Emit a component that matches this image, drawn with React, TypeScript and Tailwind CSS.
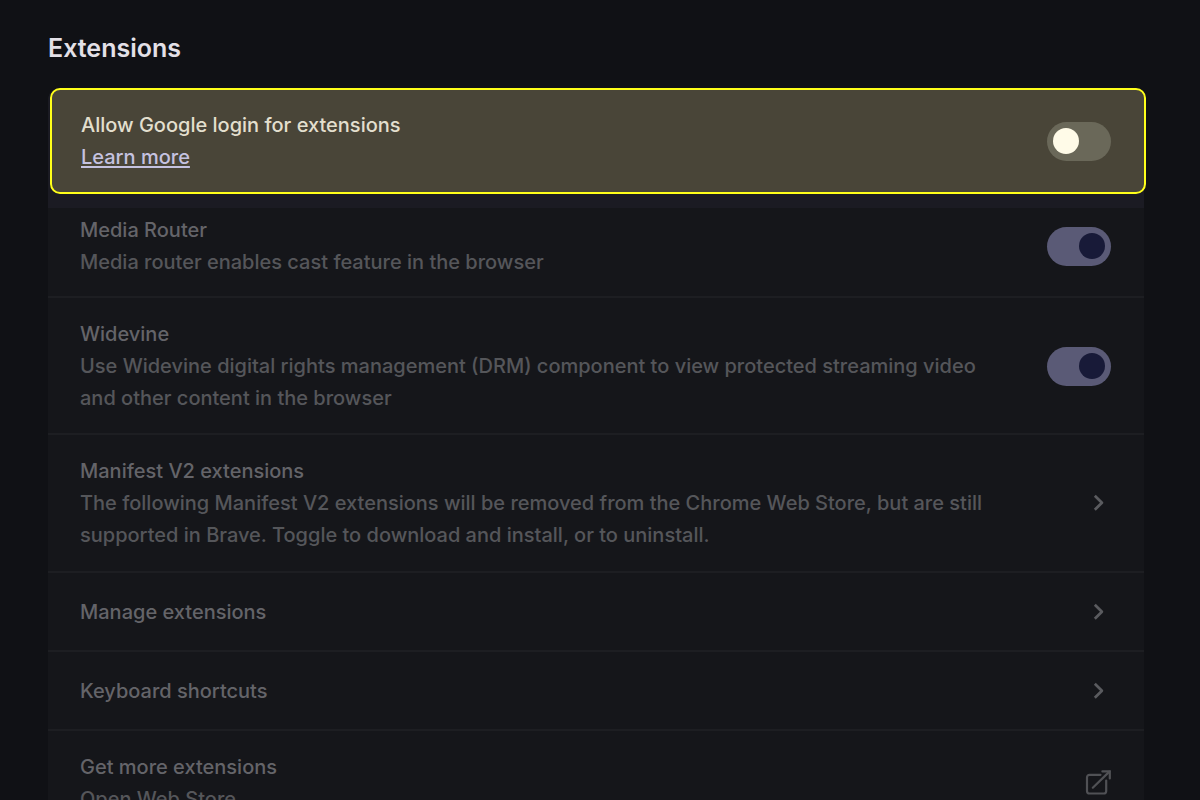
import React from "react";

interface ToggleProps {
  id: string;
  on?: boolean;
}

// Off switches only appear on the highlighted row, so they take its warm tint
const Toggle = ({ id, on = false }: ToggleProps) => (
  <input
    id={id}
    type="checkbox"
    role="switch"
    defaultChecked={on}
    className="h-[39px] w-16 shrink-0 cursor-pointer appearance-none rounded-full bg-[#6a6859] p-1.5
      before:block before:size-[26px] before:rounded-full before:bg-[#fffbe8] before:content-['']
      checked:bg-[#5a5a76] checked:before:translate-x-[26px] checked:before:bg-[#181a38]"
  />
);

const ChevronIcon = () => (
  <svg
    className="mr-0.5 size-5 shrink-0 text-[#5a5b5f]"
    viewBox="0 0 20 20"
    fill="none"
    stroke="currentColor"
    strokeWidth="2.7"
    aria-hidden="true"
  >
    <path d="M5.8 2.8 L12.9 9.8 L5.8 16.8" strokeLinejoin="round" />
  </svg>
);

const LaunchIcon = () => (
  <svg
    className="size-[26px] shrink-0 text-[#505155]"
    viewBox="0 0 26 26"
    fill="none"
    stroke="currentColor"
    strokeWidth="2.2"
    aria-hidden="true"
  >
    <path
      d="M15.5 4.8H4.6A2.6 2.6 0 0 0 2 7.4V20.9A2.6 2.6 0 0 0 4.6 23.5H18.6A2.6 2.6 0 0 0 21.2 20.9V10.5"
      strokeLinecap="round"
    />
    <path d="M7.8 17.7L24.4 1.6" strokeLinecap="round" />
    <path d="M17.4 1.4H24.8V8.4" strokeLinecap="round" />
  </svg>
);

interface LinkRowProps {
  title: string;
  description?: string;
  icon: React.ReactNode;
}

const LinkRow = ({ title, description, icon }: LinkRowProps) => (
  <button
    type="button"
    className="flex min-h-[79px] w-full cursor-pointer items-center justify-between gap-10 border-b-2
      border-[#1d1e22] py-5 pr-[33px] pl-8 text-left last:border-b-0"
  >
    <span className="block">
      <span className="block">{title}</span>
      {description && (
        <span className="block text-[#55565a]">{description}</span>
      )}
    </span>
    {icon}
  </button>
);

const App = () => {
  return (
    <main className="h-screen overflow-hidden bg-[#101115] pr-14 pl-12 font-['Inter',sans-serif] text-[20px] leading-8 font-medium text-[#646469]">
      <h1 className="pt-8 pb-6 text-[25px] leading-8 font-semibold text-[#e3e0e7]">
        Extensions
      </h1>

      <section className="rounded-t-xl bg-[#15161a]">
        {/* Highlighted setting */}
        <div className="rounded-t-xl bg-[#1b1b23] pb-3.5">
          <div
            className="-mr-0.5 ml-0.5 flex items-center justify-between rounded-[10px] border-2 border-[#ffff1a]
              bg-[#494538] py-[19px] pr-[33px] pl-[29px]"
          >
            <div>
              <label htmlFor="google-login" className="block text-[#e3dfce]">
                Allow Google login for extensions
              </label>
              <a
                href="#learn-more"
                className="block w-fit text-[#c5c2e0] underline decoration-2 underline-offset-2"
              >
                Learn more
              </a>
            </div>
            <Toggle id="google-login" />
          </div>
        </div>

        <div className="flex items-center justify-between gap-10 border-b-2 border-[#1d1e22] pt-1.5 pr-[33px] pb-[18px] pl-8">
          <label htmlFor="media-router">
            <span className="block">Media Router</span>
            <span className="block text-[#55565a]">
              Media router enables cast feature in the browser
            </span>
          </label>
          <Toggle id="media-router" on />
        </div>

        <div className="flex items-center justify-between gap-10 border-b-2 border-[#1d1e22] pt-5 pr-[33px] pb-[19px] pl-8">
          <label htmlFor="widevine">
            <span className="block">Widevine</span>
            <span className="block text-[#55565a]">
              Use Widevine digital rights management (DRM) component to view
              protected streaming video and other content in the browser
            </span>
          </label>
          <Toggle id="widevine" on />
        </div>

        <LinkRow
          title="Manifest V2 extensions"
          description="The following Manifest V2 extensions will be removed from the Chrome Web Store, but are still supported in Brave. Toggle to download and install, or to uninstall."
          icon={<ChevronIcon />}
        />
        <LinkRow title="Manage extensions" icon={<ChevronIcon />} />
        <LinkRow title="Keyboard shortcuts" icon={<ChevronIcon />} />
        <LinkRow
          title="Get more extensions"
          description="Open Web Store"
          icon={<LaunchIcon />}
        />
      </section>
    </main>
  );
};

export default App;
